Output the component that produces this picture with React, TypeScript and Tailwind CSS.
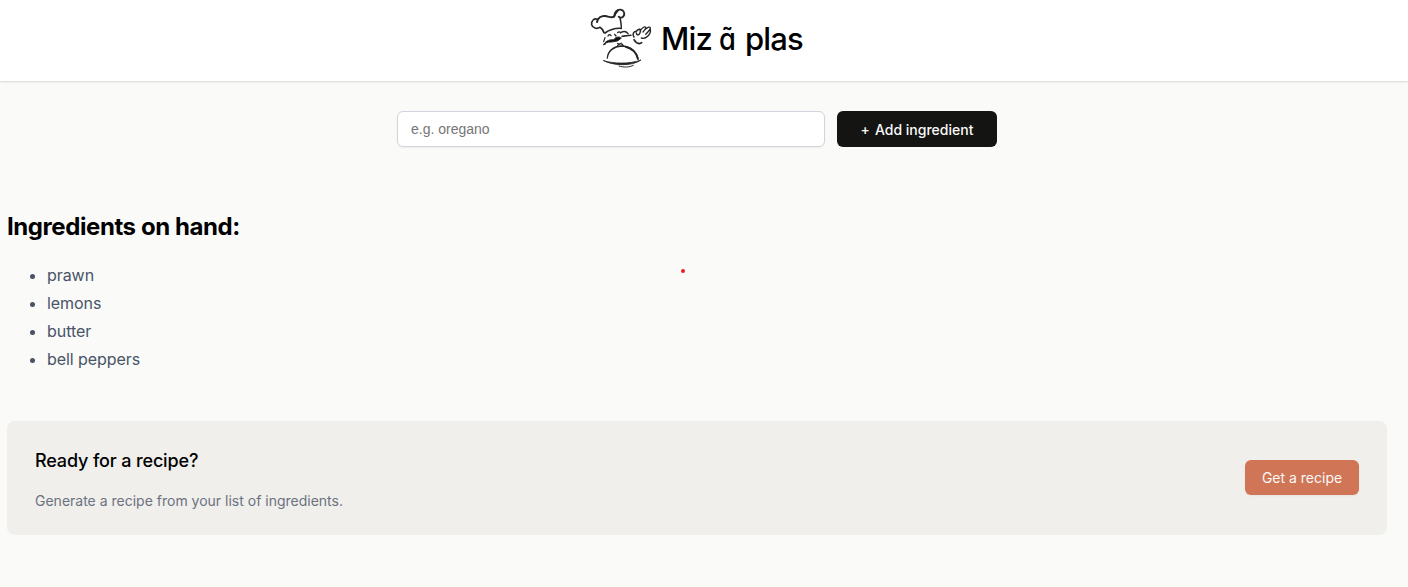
import React from "react";

const ingredients: string[] = ["prawn", "lemons", "butter", "bell peppers"];

function ChefLogo() {
  return (
    <svg
      className="h-[60px] w-[62px] shrink-0"
      viewBox="30 24 186 180"
      fill="none"
      stroke="#262626"
      strokeLinecap="round"
      strokeLinejoin="round"
      aria-hidden="true"
    >
      <path d="M72 98C69 91 66 85 60 82C50 88 38 84 35 74C33 62 43 54 52 58" strokeWidth="5" />
      <path d="M51 66C53 54 64 46 76 48C87 50 95 54 102 50C105 43 109 36 114 31" strokeWidth="6" />
      <path d="M103 49C103 36 112 28 122 29C132 31 136 41 130 49C126 54 120 54 116 50" strokeWidth="5.5" />
      <path d="M120 53C122 63 124 72 124 82" strokeWidth="4.5" />
      <path d="M75 99C90 88 107 84 124 85" strokeWidth="5" />
      <path d="M84 108C86 103 90 103 93 107M113 98C116 94 120 95 122 99M104 103L108 108" strokeWidth="4" />
      <path d="M75 113L71 125M71 134L77 131" strokeWidth="3.5" />
      <path d="M72 132C79 120 92 119 101 119C109 109 118 110 124 114C119 117 116 124 105 124C96 128 84 123 72 132Z" fill="#111" strokeWidth="3" />
      <path d="M123 97C132 93 139 94 144 101M126 109C136 109 143 106 153 106" strokeWidth="4.5" />
      <path d="M112 130L118 132L124 129" strokeWidth="3" />
      <path d="M162 111C156 103 160 95 169 94C178 83 184 87 180 98C176 108 170 107 169 99" strokeWidth="4.5" />
      <path d="M181 91C189 82 193 78 197 82C199 85 193 91 189 96M196 88C204 80 211 79 211 85C210 91 201 98 197 103M211 88C213 96 210 102 203 109C196 116 190 116 184 114" strokeWidth="4" />
      <path d="M162 119C165 125 170 130 178 131L185 128" strokeWidth="5" />
      <path d="M82 174C84 152 102 139 124 138C150 139 169 155 173 174" strokeWidth="4" />
      <path d="M137 140C157 145 170 158 174 177" strokeWidth="6" />
      <path d="M113 136C117 130 127 130 130 137" strokeWidth="4" />
      <path d="M71 182C98 191 149 193 183 180C155 200 99 197 71 182Z" fill="#262626" strokeWidth="2.5" />
      <path d="M117 198C131 203 149 202 160 196" strokeWidth="3" />
    </svg>
  );
}

export default function App() {
  return (
    <div className="relative h-[587px] overflow-hidden bg-[#fafaf8] font-['Inter',sans-serif] text-black">
      <header className="flex h-[81px] justify-center bg-white pr-[15px] pt-2 shadow-[0_1px_2px_rgba(0,0,0,0.15)]">
        <ChefLogo />
        <h1 className="ml-[9px] mt-3 w-[142px] whitespace-nowrap text-[31px] font-[450] leading-[38px] tracking-[-0.85px]">
          Miz <span className="inline-block origin-left scale-x-[0.88]">ɑ̃</span> plas
        </h1>
      </header>

      <main className="pl-[7px] pr-[21px] pt-[30px]">
        <form className="flex h-9 justify-center gap-3" onSubmit={(e) => e.preventDefault()}>
          <input
            type="text"
            aria-label="Add ingredient"
            placeholder="e.g. oregano"
            className="w-[428px] rounded-md border border-[#d1d5db] bg-white px-[13px] text-sm font-['Liberation_Sans',sans-serif] shadow-[0_1px_2px_rgba(0,0,0,0.05)] placeholder:text-[#757575]"
          />
          <button className="w-40 rounded-md bg-[#141413] pt-0.5 text-sm font-medium text-[#fafaf8]">
            <span className="mr-[5px]">+</span>
            Add ingredient
          </button>
        </form>

        <section>
          <h2 className="mt-[65px] text-2xl font-bold leading-[29px] tracking-[-0.42px]">Ingredients on hand:</h2>
          <ul className="mt-5 list-disc pl-10 text-base leading-7 tracking-[-0.06px] text-[#475467]">
            {ingredients.map((item) => (
              <li key={item}>{item}</li>
            ))}
          </ul>
          <div className="mt-12 flex h-[114px] items-center justify-between rounded-lg bg-[#f0efeb] px-7">
            <div className="pt-0.5">
              <h3 className="text-lg font-medium leading-6 tracking-[-0.15px]">Ready for a recipe?</h3>
              <p className="mt-[19px] text-sm leading-[17px] text-[#6b7280]">
                Generate a recipe from your list of ingredients.
              </p>
            </div>
            <button className="mb-0.5 h-[35px] w-[114px] rounded-md bg-[#d17557] pt-0.5 text-sm text-[#fafaf8] shadow-[0_1px_2px_rgba(0,0,0,0.05)]">
              Get a recipe
            </button>
          </div>
        </section>
      </main>

      <span className="absolute left-[681px] top-[269px] size-1 rounded-full bg-[#ed1c24]" />
    </div>
  );
}
